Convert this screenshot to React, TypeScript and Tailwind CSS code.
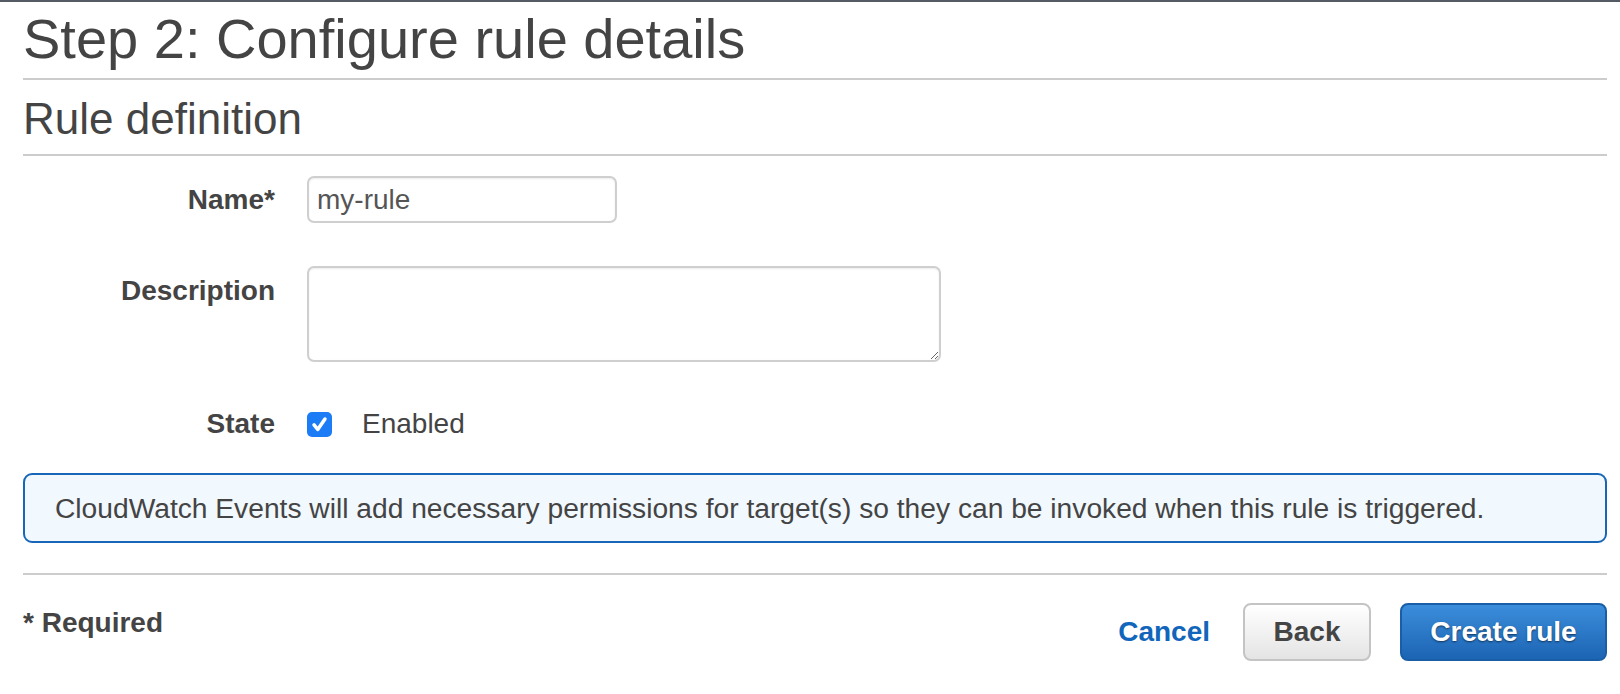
import React, { useState } from "react";

const FieldLabel = ({ children }: { children: React.ReactNode }) => (
  <div className="w-[252px] shrink-0 text-right text-[28px] leading-[40px] font-bold text-[#444]">
    {children}
  </div>
);

const App = () => {
  const [name, setName] = useState("my-rule");
  const [description, setDescription] = useState("");
  const [enabled, setEnabled] = useState(true);

  return (
    <div className="min-h-screen w-full bg-white font-['Liberation_Sans',Arial,sans-serif] text-[#444]">
      {/* Console top strip */}
      <div className="h-[2px] w-full bg-[#545b64]" />

      <div className="pl-[23px] pr-[13px]">
        {/* Page title */}
        <div className="pt-[4px] pb-[6px] border-b-2 border-[#cccccc]">
          <h1 className="text-[56px] leading-[66px] font-normal text-[#444]">Step 2: Configure rule details</h1>
        </div>

        {/* Section heading */}
        <div className="mt-[13px] pb-[9px] border-b-2 border-[#cccccc]">
          <h2 className="text-[44px] leading-[52px] font-normal text-[#444]">Rule definition</h2>
        </div>

        {/* Form */}
        <div className="flex flex-col">
          {/* Name */}
          <div className="mt-[20px] flex items-center gap-[32px]">
            <FieldLabel>Name*</FieldLabel>
            <input
              type="text"
              value={name}
              onChange={(e) => setName(e.target.value)}
              className="w-[310px] h-[47px] px-[8px] rounded-[7px] border-2 border-[#cfcfcf] bg-white text-[28px] text-[#555] shadow-[inset_0_1px_2px_rgba(0,0,0,0.08)] outline-none"
            />
          </div>

          {/* Description */}
          <div className="mt-[43px] flex items-start gap-[32px]">
            <div className="pt-[5px]">
              <FieldLabel>Description</FieldLabel>
            </div>
            <textarea
              value={description}
              onChange={(e) => setDescription(e.target.value)}
              className="block w-[634px] h-[96px] px-[8px] py-[4px] rounded-[7px] border-2 border-[#cfcfcf] bg-white text-[28px] text-[#555] shadow-[inset_0_1px_2px_rgba(0,0,0,0.08)] outline-none"
            />
          </div>

          {/* State */}
          <div className="mt-[42px] flex items-center gap-[32px]">
            <FieldLabel>State</FieldLabel>
            <div className="flex items-center gap-[30px]">
              <button
                type="button"
                onClick={() => setEnabled(!enabled)}
                className={`flex items-center justify-center w-[25px] h-[25px] rounded-[5px] ${
                  enabled ? "bg-[#1b7cf6]" : "bg-white border-2 border-[#999]"
                }`}
              >
                {enabled && (
                  <svg viewBox="0 0 16 16" className="w-[19px] h-[19px]" fill="none">
                    <path d="M3.4 8.4 L6.5 12.2 L12.6 3.4" stroke="white" strokeWidth="3" strokeLinecap="round" strokeLinejoin="round" />
                  </svg>
                )}
              </button>
              <span className="text-[28px] leading-[40px] text-[#444]">Enabled</span>
            </div>
          </div>
        </div>

        {/* Info notice */}
        <div className="mt-[29px] h-[70px] flex items-center px-[30px] rounded-[9px] border-2 border-[#1766b8] bg-[#f1f8fe]">
          <p className="text-[28.2px] leading-[36px] text-[#444]">
            CloudWatch Events will add necessary permissions for target(s) so they can be invoked when this rule is triggered.
          </p>
        </div>

        {/* Footer */}
        <div className="mt-[30px] border-t-2 border-[#cccccc] pt-[28px] flex items-start justify-between">
          <div className="mt-[4px] text-[28px] leading-[32px] font-bold text-[#444]">* Required</div>
          <div className="flex items-center">
            <button type="button" className="text-[28px] font-bold text-[#1166bb]">
              Cancel
            </button>
            <button
              type="button"
              className="ml-[33px] w-[128px] h-[58px] rounded-[8px] border-2 border-[#c4c4c4] bg-linear-to-b from-white to-[#e4e4e4] text-[28px] font-bold text-[#444]"
            >
              Back
            </button>
            <button
              type="button"
              className="ml-[29px] w-[207px] h-[58px] rounded-[8px] border-2 border-[#1a5ea8] bg-linear-to-b from-[#3b8edb] to-[#1c64b4] text-[28px] font-bold text-white [text-shadow:0_1px_2px_rgba(0,0,0,0.55)]"
            >
              Create rule
            </button>
          </div>
        </div>
      </div>
    </div>
  );
};

export default App;
